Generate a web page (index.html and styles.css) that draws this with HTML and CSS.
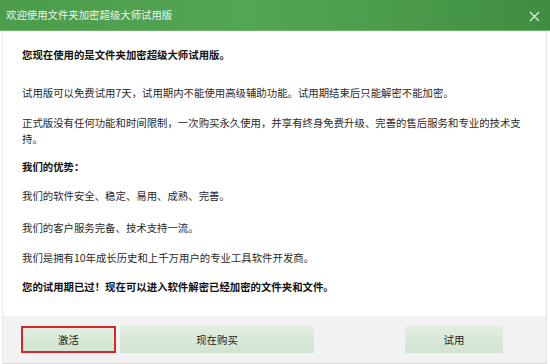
FILE: index.html
```html
<!DOCTYPE html>
<html lang="zh-CN">
<head>
<meta charset="utf-8">
<title>欢迎使用文件夹加密超级大师试用版</title>
<link rel="stylesheet" href="styles.css">
</head>
<body>
<div class="window">
  <div class="titlebar">
    <span class="title">欢迎使用文件夹加密超级大师试用版</span>
    <svg class="close" width="11" height="11" viewBox="0 0 11 11" aria-label="关闭">
      <path d="M1 1 L10 10 M10 1 L1 10" stroke="#d8ecd6" stroke-width="1.4" fill="none"/>
    </svg>
  </div>
  <div class="content">
    <p class="strong p1">您现在使用的是文件夹加密超级大师试用版。</p>
    <p class="p2">试用版可以免费试用7天，试用期内不能使用高级辅助功能。试用期结束后只能解密不能加密。</p>
    <p class="p3">正式版没有任何功能和时间限制，一次购买永久使用，并享有终身免费升级、完善的售后服务和专业的技术支<br>持。</p>
    <p class="strong p4">我们的优势：</p>
    <p class="p5">我们的软件安全、稳定、易用、成熟、完善。</p>
    <p class="p6">我们的客户服务完备、技术支持一流。</p>
    <p class="p7">我们是拥有10年成长历史和上千万用户的专业工具软件开发商。</p>
    <p class="strong p8">您的试用期已过！现在可以进入软件解密已经加密的文件夹和文件。</p>
  </div>
  <div class="footer">
    <button class="btn btn-activate">激活</button>
    <button class="btn btn-buy">现在购买</button>
    <button class="btn btn-trial">试用</button>
  </div>
</div>
</body>
</html>
```

FILE: styles.css
```css
* { box-sizing: border-box; }
html, body {
  margin: 0;
  padding: 0;
  width: 550px;
  height: 364px;
  background: #ffffff;
  overflow: hidden;
}
body {
  font-family: "Noto Sans CJK SC", "Noto Sans", sans-serif;
  font-size: 10.4px;
  color: #2a2a2a;
}
.window {
  display: flex;
  flex-direction: column;
  height: 364px;
}
.titlebar {
  height: 31px;
  flex: none;
  display: flex;
  align-items: center;
  justify-content: space-between;
  padding: 0 10px 0 6px;
  background: linear-gradient(to right, #4b9c4b 0%, #53a654 45%, #4a9a4a 75%, #3f8d40 100%);
  border-bottom: 1px solid #6db56d;
}
.title {
  color: #eef6ed;
  font-size: 10.4px;
  line-height: 14px;
}
.close { display: block; margin-top: 2px; }
.content {
  flex: 1;
  margin: 0 3px 0 2px;
  border-left: 1px solid #ececec;
  border-right: 1px solid #e2e2e2;
  padding: 0 18px 0 19px;
}
.content p {
  margin: 0;
  line-height: 16px;
}
.strong { font-weight: bold; color: #111; }
.p1 { margin-top: 16px !important; }
.p2 { margin-top: 22px !important; }
.p3 { margin-top: 14px !important; }
.p4 { margin-top: 12px !important; }
.p5 { margin-top: 13px !important; }
.p6 { margin-top: 16px !important; }
.p7 { margin-top: 14px !important; }
.p8 { margin-top: 13px !important; }
.footer {
  flex: none;
  height: 48px;
  margin: 0 3px 0 2px;
  background: #f2f2f2;
  border-left: 1px solid #e6e6e6;
  border-right: 1px solid #e2e2e2;
  border-bottom: 1px solid #dcdcdc;
  display: flex;
  align-items: flex-start;
  padding: 10px 43px 0 18px;
  gap: 4px;
}
.btn {
  height: 27px;
  border: none;
  background: linear-gradient(to bottom, #e2efe1, #d0e4cf);
  font-family: "Noto Sans CJK SC", "Noto Sans", sans-serif;
  font-size: 10.4px;
  color: #222;
  padding: 0;
}
.btn-activate {
  width: 95px;
  border: 2px solid #d9262c;
}
.btn-buy { width: 194px; }
.btn-trial { width: 98px; margin-left: auto; }
```
